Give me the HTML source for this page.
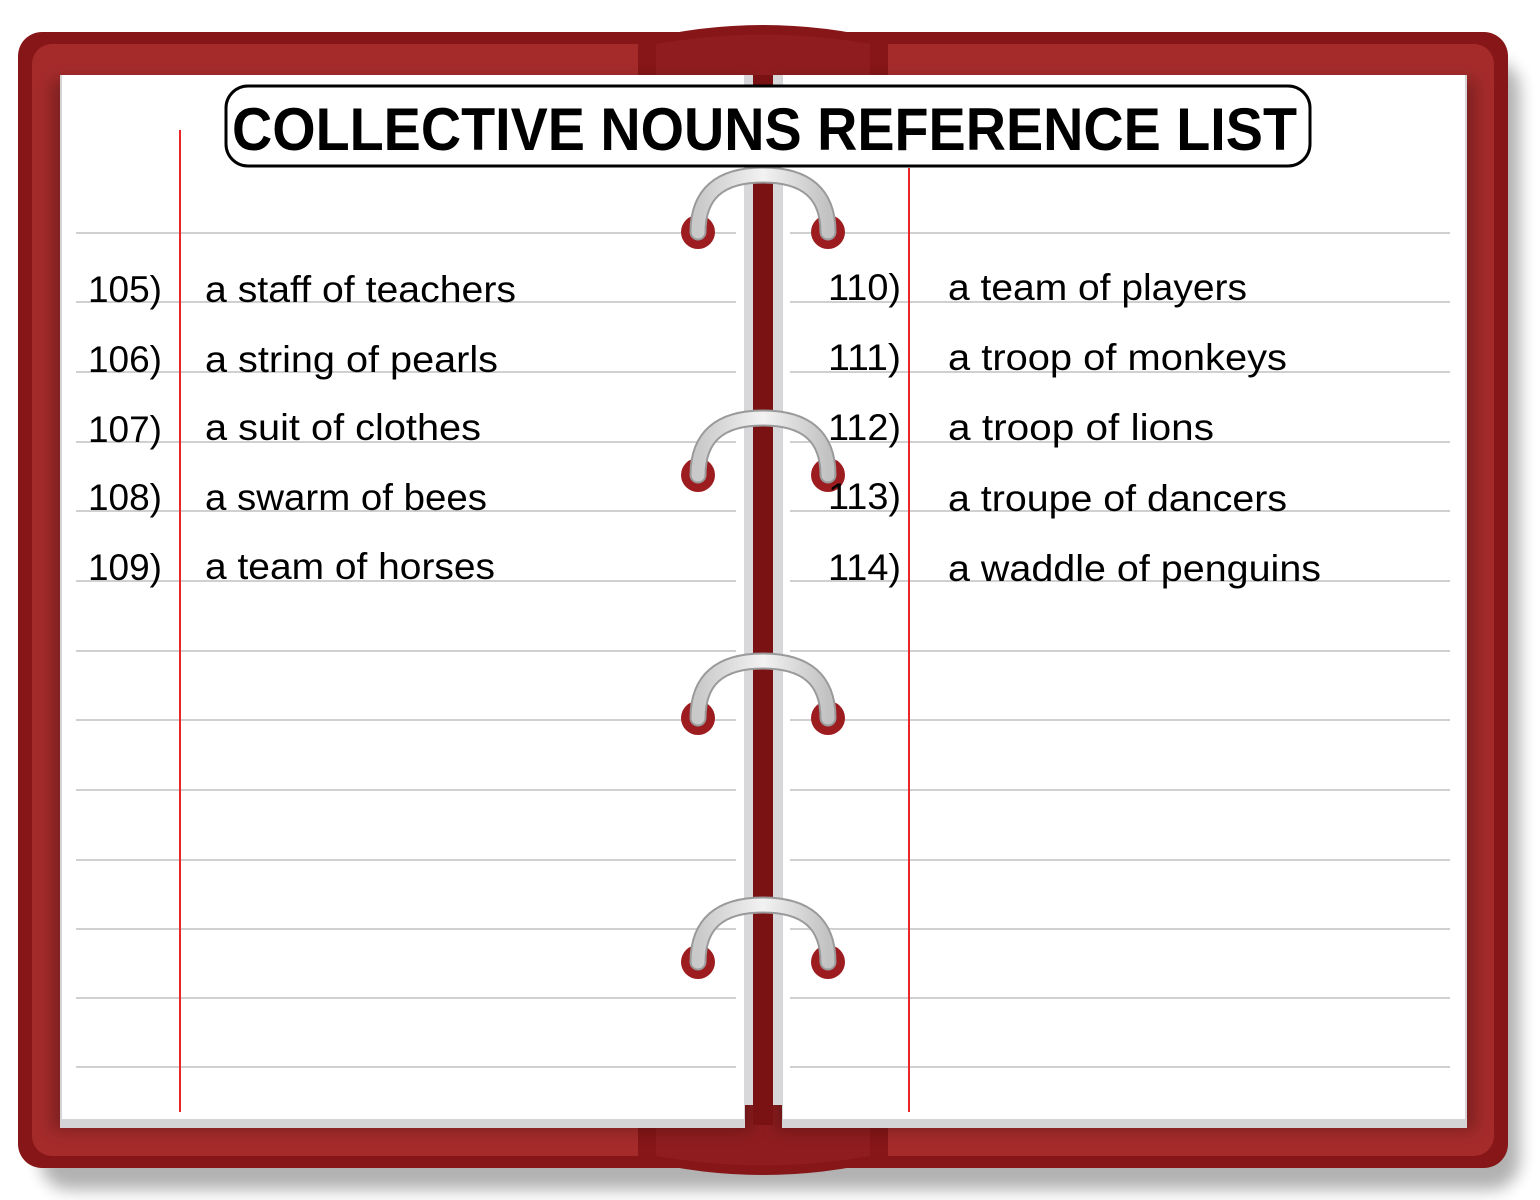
<!DOCTYPE html>
<html><head><meta charset="utf-8"><style>
html,body{margin:0;padding:0;background:#fff;width:1540px;height:1200px;overflow:hidden}
svg{display:block}
text{font-family:"Liberation Sans",sans-serif;fill:#000}
</style></head><body>
<svg width="1540" height="1200" viewBox="0 0 1540 1200">
<defs>
<filter id="sh" x="-10%" y="-10%" width="120%" height="130%"><feGaussianBlur stdDeviation="8"/></filter>
<linearGradient id="ring" x1="0" y1="0" x2="1" y2="0"><stop offset="0" stop-color="#c9c9c9"/><stop offset="0.5" stop-color="#f2f2f2"/><stop offset="1" stop-color="#c2c2c2"/></linearGradient>
</defs>
<!-- shadow -->
<rect x="40" y="60" width="1480" height="1130" rx="30" fill="#000" opacity="0.3" filter="url(#sh)"/>
<!-- cover -->
<rect x="18" y="32" width="1490" height="1136" rx="24" fill="#861617"/>
<path d="M640 40 Q763 10 886 40 L886 1160 Q763 1190 640 1160 Z" fill="#861617"/>
<rect x="32" y="44" width="1462" height="1112" rx="20" fill="#a52b2b"/>
<rect x="638" y="44" width="250" height="1112" fill="#861617"/>
<path d="M656 44 Q763 25 870 44 L870 1156 Q763 1175 656 1156 Z" fill="#8f1d1f"/>
<!-- pages -->
<rect x="52" y="80" width="700" height="1050" fill="#000" opacity="0.25" filter="url(#sh)"/>
<rect x="775" y="80" width="700" height="1050" fill="#000" opacity="0.25" filter="url(#sh)"/>
<rect x="60" y="75" width="685" height="1053" fill="#d4d4d6"/>
<rect x="62" y="75" width="682" height="1044" fill="#fff"/>
<rect x="782" y="75" width="685" height="1053" fill="#d4d4d6"/>
<rect x="783" y="75" width="682" height="1044" fill="#fff"/>
<!-- spine -->
<rect x="744" y="75" width="38" height="1030" fill="#d8d8da"/>
<rect x="753" y="75" width="20" height="1050" fill="#7a1113"/>
<!-- lines -->
<g stroke="#d0d0d0" stroke-width="2">
<path d="M76 233H736M790 233H1450M76 302H736M790 302H1450M76 372H736M790 372H1450M76 442H736M790 442H1450M76 511H736M790 511H1450M76 581H736M790 581H1450M76 651H736M790 651H1450M76 720H736M790 720H1450M76 790H736M790 790H1450M76 860H736M790 860H1450M76 929H736M790 929H1450M76 998H736M790 998H1450M76 1067H736M790 1067H1450"/>
</g>
<g stroke="#e8262a" stroke-width="2">
<path d="M180 130V1112M909 168V1112"/>
</g>
<!-- rings -->
<g id="r1">
<circle cx="698" cy="232" r="17" fill="#9c1c1f"/>
<circle cx="828" cy="232" r="17" fill="#9c1c1f"/>
<path d="M698 232 Q698 175 763 175 Q828 175 828 232" fill="none" stroke="#9a9a9a" stroke-width="17" stroke-linecap="round"/>
<path d="M698 232 Q698 175 763 175 Q828 175 828 232" fill="none" stroke="url(#ring)" stroke-width="13" stroke-linecap="round"/>
</g>
<use href="#r1" y="243"/>
<use href="#r1" y="486"/>
<use href="#r1" y="730"/>
<!-- title -->
<rect x="226" y="86" width="1084" height="80" rx="22" fill="#fff" stroke="#000" stroke-width="3"/>
<text x="232" y="150" font-size="60" font-weight="bold" textLength="1065" lengthAdjust="spacingAndGlyphs">COLLECTIVE NOUNS REFERENCE LIST</text>
<!-- entries -->
<g font-size="37">
<text x="88" y="302" textLength="74" lengthAdjust="spacingAndGlyphs">105)</text>
<text x="205" y="302" textLength="311" lengthAdjust="spacingAndGlyphs">a staff of teachers</text>
<text x="88" y="372" textLength="74" lengthAdjust="spacingAndGlyphs">106)</text>
<text x="205" y="372" textLength="293" lengthAdjust="spacingAndGlyphs">a string of pearls</text>
<text x="88" y="442" textLength="74" lengthAdjust="spacingAndGlyphs">107)</text>
<text x="205" y="440" textLength="276" lengthAdjust="spacingAndGlyphs">a suit of clothes</text>
<text x="88" y="510" textLength="74" lengthAdjust="spacingAndGlyphs">108)</text>
<text x="205" y="510" textLength="282" lengthAdjust="spacingAndGlyphs">a swarm of bees</text>
<text x="88" y="580" textLength="74" lengthAdjust="spacingAndGlyphs">109)</text>
<text x="205" y="579" textLength="290" lengthAdjust="spacingAndGlyphs">a team of horses</text>
<text x="828" y="300" textLength="73" lengthAdjust="spacingAndGlyphs">110)</text>
<text x="948" y="300" textLength="299" lengthAdjust="spacingAndGlyphs">a team of players</text>
<text x="828" y="370" textLength="73" lengthAdjust="spacingAndGlyphs">111)</text>
<text x="948" y="370" textLength="339" lengthAdjust="spacingAndGlyphs">a troop of monkeys</text>
<text x="828" y="440" textLength="73" lengthAdjust="spacingAndGlyphs">112)</text>
<text x="948" y="440" textLength="266" lengthAdjust="spacingAndGlyphs">a troop of lions</text>
<text x="828" y="509" textLength="73" lengthAdjust="spacingAndGlyphs">113)</text>
<text x="948" y="511" textLength="339" lengthAdjust="spacingAndGlyphs">a troupe of dancers</text>
<text x="828" y="580" textLength="73" lengthAdjust="spacingAndGlyphs">114)</text>
<text x="948" y="581" textLength="373" lengthAdjust="spacingAndGlyphs">a waddle of penguins</text>
</g>
</svg>
</body></html>
